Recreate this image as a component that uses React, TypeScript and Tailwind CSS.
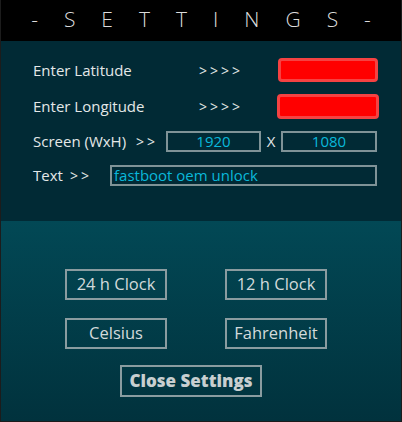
import React from "react";

const font = { fontFamily: '"Open Sans", "Noto Sans", sans-serif' };

export default function App() {
  const title = ["-", "S", "E", "T", "T", "I", "N", "G", "S", "-"];
  return (
    <div
      className="relative w-[402px] h-[422px] flex flex-col bg-[#0a0a0a] border-l border-r border-b border-[#1c1c1c] overflow-hidden"
      style={font}
    >
      <div className="h-[41px] shrink-0 bg-black flex items-center justify-center gap-[26px] text-[21px] font-light text-[#dcdcdc] pb-[1px]">
        {title.map((c, i) => (
          <span key={i}>{c}</span>
        ))}
      </div>

      <div className="h-[180px] shrink-0 bg-[#012a35] flex flex-col pl-[32px] pt-[17px] text-[15px] text-[#e4e8e8]">
        <div className="h-[24px] flex items-center">
          <span className="w-[166px]">Enter Latitude</span>
          <span className="w-[79px] text-[14px] tracking-[3px]">&gt;&gt;&gt;&gt;</span>
          <div className="w-[100px] h-[24px] rounded-[4px] border-[3px] border-[#f54242] bg-[#ff0000]" />
        </div>
        <div className="h-[25px] mt-[12px] flex items-center">
          <span className="w-[166px]">Enter Longitude</span>
          <span className="w-[78px] text-[14px] tracking-[3px]">&gt;&gt;&gt;&gt;</span>
          <div className="w-[102px] h-[25px] rounded-[4px] border-[3px] border-[#f54242] bg-[#ff0000]" />
        </div>
        <div className="h-[20px] mt-[12px] flex items-center">
          <span className="w-[103px]">Screen (WxH)</span>
          <span className="w-[30px] text-[14px] tracking-[3px]">&gt;&gt;</span>
          <div className="w-[95px] h-[21px] border-2 border-[#7f9397] flex items-center justify-center text-[#0ab8da] text-[15px]">
            1920
          </div>
          <span className="w-[20px] text-center">X</span>
          <div className="w-[96px] h-[21px] border-2 border-[#7f9397] flex items-center justify-center text-[#0ab8da] text-[15px]">
            1080
          </div>
        </div>
        <div className="h-[21px] mt-[14px] flex items-center">
          <span className="w-[37px]">Text</span>
          <span className="w-[40px] text-[14px] tracking-[3px]">&gt;&gt;</span>
          <div className="w-[267px] h-[21px] border-2 border-[#7f9397] flex items-center pl-[2px] text-[#0ab8da] text-[15px]">
            fastboot oem unlock
          </div>
        </div>
      </div>

      <div className="flex-1 bg-gradient-to-b from-[#024855] to-[#01323d] flex flex-col pl-[64px] pt-[48px] text-[#d2dadb]">
        <div className="flex gap-[58px]">
          <div className="w-[102px] h-[31px] border-2 border-[#8a9ca0] flex items-center justify-center text-[16.5px]">
            24 h Clock
          </div>
          <div className="w-[102px] h-[31px] border-2 border-[#8a9ca0] flex items-center justify-center text-[16.5px]">
            12 h Clock
          </div>
        </div>
        <div className="flex gap-[58px] mt-[18px]">
          <div className="w-[102px] h-[31px] border-2 border-[#8a9ca0] flex items-center justify-center text-[16.5px]">
            Celsius
          </div>
          <div className="w-[102px] h-[31px] border-2 border-[#8a9ca0] flex items-center justify-center text-[16.5px]">
            Fahrenheit
          </div>
        </div>
        <div className="flex mt-[16px] pl-[55px]">
          <div className="w-[142px] h-[32px] border-2 border-[#8a9ca0] flex items-center justify-center text-[17px] font-extrabold text-[#c8cfd0]">
            Close Settings
          </div>
        </div>
      </div>

      <div className="absolute right-[-1px] top-[213px] w-[1px] h-[94px] bg-[#22c4d4]" />
    </div>
  );
}
